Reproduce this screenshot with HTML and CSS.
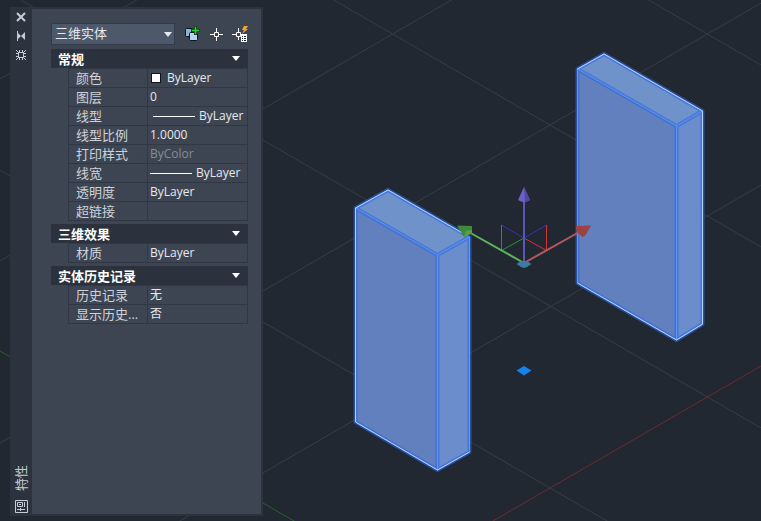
FILE: index.html
```
<!DOCTYPE html>
<html lang="zh-CN">
  <head>
    <meta charset="utf-8">
    <title>特性</title>
    <link rel="stylesheet" href="styles.css">
  </head>
  <body>
    <div class="workspace">
      <!-- model space -->
      <svg class="model" viewBox="0 0 761 521" preserveAspectRatio="xMinYMin slice" aria-hidden="true">
        <g class="grid">
          <path d="M0 -375L761 65M0 -193L761 247M0 -12L761 428M0 170L761 610" />
          <path d="M0 79L761 -361M0 261L761 -179M0 443L761 3M0 625L761 185" />
          <path class="axis-x" d="M0 806L761 366" />
          <path class="axis-y" d="M0 351L761 791" />
        </g>

        <g class="solid">
          <path class="face-top" d="M355 208L388 190L469 237L438 255Z" />
          <path class="face-front" d="M355 208L438 255V470L355 422Z" />
          <path class="face-side" d="M438 255L469 237V452L438 470Z" />
          <path class="glow" d="M355.500 208L388 190L469.500 237V452L437.500 470L355.500 422ZL437.500 255L469.500 237M437.500 255V470" />
          <path class="edge" d="M355.500 208L388 190L469.500 237V452L437.500 470L355.500 422ZL437.500 255L469.500 237M437.500 255V470" />
          <path class="edge-lit" d="M355.500 422V208L388 190L465 234.500M355.500 422L437.500 470L469.500 452" />
        </g>

        <g class="solid">
          <path class="face-top" d="M577 69L604 54L703 111L676 126Z" />
          <path class="face-front" d="M577 69L676 126V340L577 283Z" />
          <path class="face-side" d="M676 126L703 111V325L676 340Z" />
          <path class="glow" d="M577.500 69L604 54L702.500 111V324L676.500 340L577.500 283ZL676.500 126L702.500 111M676.500 126V340" />
          <path class="edge" d="M577.500 69L604 54L702.500 111V324L676.500 340L577.500 283ZL676.500 126L702.500 111M676.500 126V340" />
          <path class="edge-lit" d="M577.500 69L604 54L702.500 111V324L676.500 340L577.500 283" />
        </g>

        <!-- move gizmo -->
        <g class="gizmo">
          <path stroke="#3b2fb0" d="M501.500 225L524 238L546.500 225" />
          <path stroke="#1f9a2c" d="M501.500 225V250.500L524 238" />
          <path stroke="#d5303a" d="M546.500 225V250.500L524 238" />
          <path stroke="#5fb35c" stroke-width="2" d="M467 231L524 263" />
          <path stroke="#b45a5c" stroke-width="2" d="M581 231L524 263" />
          <path stroke="#5b57b4" stroke-width="2" d="M524 201V263" />
          <path fill="#3f8a3a" d="M457 225.500L472 226V233L464 237Z" />
          <path fill="#57a04c" d="M464 237L466 231L472 230V233Z" />
          <path fill="#9c4245" d="M591 225.500L576 226V230L582 237L585 236Z" />
          <path fill="#6d60c4" d="M524 187L518 200Q524 204 530 200Z" />
          <path fill="#5146a6" d="M524 187L525 202.500L530 200Z" />
          <path fill="#3d7ba4" d="M516.500 264L521 261H527L531.500 264L527 267L524 268L521 267Z" />
        </g>
        <path fill="#1484ea" d="M516.500 370.500L524 366L531.500 370.500L524 375.500Z" />
      </svg>

      <aside class="palette">
        <div class="strip">
          <button class="strip-btn" type="button" aria-label="关闭">
            <svg width="12" height="12" viewBox="0 0 12 12"><path d="M2 2L10 10M10 2L2 10" fill="none" stroke="currentColor" stroke-width="2" /></svg>
          </button>
          <button class="strip-btn" type="button" aria-label="自动隐藏">
            <svg width="12" height="12" viewBox="0 0 12 12"><path d="M2 1H3V11H2ZM3 3L6 6L3 9ZM10 2V10L6 6Z" fill="currentColor" /></svg>
          </button>
          <button class="strip-btn" type="button" aria-label="选项">
            <svg width="12" height="12" viewBox="0 0 12 12">
              <path d="M3.500 3.500H8.500V8.500H3.500Z" fill="none" stroke="currentColor" />
              <path d="M4.500 1V3M7.500 1V3M4.500 9V11M7.500 9V11M1 4.500H3M1 7.500H3M9 4.500H11M9 7.500H11M1 1L4 4M11 1L8 4M1 11L4 8M11 11L8 8" fill="none" stroke="currentColor" />
            </svg>
          </button>
          <span class="strip-title">特性</span>
          <svg class="strip-icon" width="13" height="13" viewBox="0 0 13 13">
            <path d="M0.500 0.500H12.500V12.500H0.500ZM2.500 2.500H7.500V6.500H2.500ZM4 4.500H6M9.500 2V7M2 9.500H10M5.500 8V11" fill="none" stroke="currentColor" />
          </svg>
        </div>

        <div class="panel">
          <div class="toolbar">
            <div class="picker">
              <select class="picker-select" aria-label="对象类型">
                <option>三维实体</option>
              </select>
              <svg class="picker-arrow" width="8" height="5" viewBox="0 0 8 5"><path d="M0 0H8L4 5Z" fill="currentColor" /></svg>
            </div>
            <button class="tool" type="button" aria-label="切换 PICKADD">
              <svg width="16" height="16" viewBox="0 0 16 16">
                <rect x="1.500" y="2.500" width="8" height="8" rx="1" fill="#8fb4dc" stroke="#10151c" />
                <rect x="5.500" y="6.500" width="8" height="8" rx="1" fill="#b7d4f2" stroke="#10151c" />
                <path d="M10 0H13V3H16V6H13V9H10V6H7V3H10Z" fill="#0c3a12" />
                <path d="M11 1H12V4H15V5H12V8H11V5H8V4H11Z" fill="#2fd43a" stroke="#2fd43a" stroke-width="0.500" />
              </svg>
            </button>
            <button class="tool" type="button" aria-label="选择对象">
              <svg width="16" height="16" viewBox="0 0 16 16">
                <path d="M8.500 2V6M8.500 11V15M2 8.500H6M11 8.500H15M6.500 6.500H10.500V10.500H6.500Z" fill="none" stroke="#fff" />
              </svg>
            </button>
            <button class="tool" type="button" aria-label="快速选择">
              <svg width="16" height="16" viewBox="0 0 16 16">
                <path d="M6.500 2V6M6.500 10V14M0 8.500H4M4.500 6.500H8.500V10.500H4.500Z" fill="none" stroke="#fff" />
                <path d="M12 0H16L14 3H16L10 8L12 4H10Z" fill="#f5a02c" />
                <path d="M9 8H15V16H9Z" fill="#fff" />
                <path d="M10 10H11V11H10ZM12 10H14V11H12ZM10 12H11V13H10ZM12 12H14V13H12ZM10 14H11V15H10ZM12 14H14V15H12Z" fill="#222833" />
              </svg>
            </button>
          </div>

          <section class="group">
            <button class="group-head" type="button">常规<svg width="8" height="5" viewBox="0 0 8 5"><path d="M0 0H8L4 5Z" fill="currentColor" /></svg></button>
            <table class="props">
              <tr><th scope="row">颜色</th><td><span class="cell"><i class="swatch"></i>ByLayer</span></td></tr>
              <tr><th scope="row">图层</th><td>0</td></tr>
              <tr><th scope="row">线型</th><td><span class="cell linetype"><i class="line"></i>ByLayer</span></td></tr>
              <tr><th scope="row">线型比例</th><td>1.0000</td></tr>
              <tr><th scope="row">打印样式</th><td class="muted">ByColor</td></tr>
              <tr><th scope="row">线宽</th><td><span class="cell"><i class="line"></i>ByLayer</span></td></tr>
              <tr><th scope="row">透明度</th><td>ByLayer</td></tr>
              <tr><th scope="row">超链接</th><td></td></tr>
            </table>
          </section>

          <section class="group">
            <button class="group-head" type="button">三维效果<svg width="8" height="5" viewBox="0 0 8 5"><path d="M0 0H8L4 5Z" fill="currentColor" /></svg></button>
            <table class="props">
              <tr><th scope="row">材质</th><td>ByLayer</td></tr>
            </table>
          </section>

          <section class="group">
            <button class="group-head" type="button">实体历史记录<svg width="8" height="5" viewBox="0 0 8 5"><path d="M0 0H8L4 5Z" fill="currentColor" /></svg></button>
            <table class="props">
              <tr><th scope="row">历史记录</th><td>无</td></tr>
              <tr><th scope="row">显示历史...</th><td>否</td></tr>
            </table>
          </section>
        </div>
      </aside>
    </div>
  </body>
</html>
```

FILE: styles.css
```
* {
  box-sizing: border-box;
}
body {
  margin: 0;
  background: #212832;
  color: #e6e9ee;
  font-family: "Open Sans", "Noto Sans CJK SC", sans-serif;
  font-size: 12px;
}
button,
select {
  font: inherit;
  color: inherit;
  border: none;
  padding: 0;
  margin: 0;
  background: none;
}

/* the palette floats over the model, both share one grid cell */
.workspace {
  display: grid;
  height: 100vh;
  overflow: hidden;
}
.model {
  grid-area: 1 / 1;
  width: 100%;
  height: 100%;
}
.grid path {
  fill: none;
  stroke: #363d46;
}
.grid .axis-x {
  stroke: #6d2a33;
}
.grid .axis-y {
  stroke: #25602f;
}
.face-top {
  fill: #7092cb;
}
.face-front {
  fill: #6180bd;
}
.face-side {
  fill: #6b8dcc;
}
.glow,
.edge,
.edge-lit {
  fill: none;
  stroke-linejoin: round;
}
.glow {
  stroke: #2f6ae0;
  stroke-width: 4;
  opacity: 0.6;
}
.edge {
  stroke: #5f94fa;
}
.edge-lit {
  stroke: #b4cffa;
}
.gizmo path:not([fill]) {
  fill: none;
}

.palette {
  grid-area: 1 / 1;
  justify-self: start;
  display: flex;
  margin: 7px 0 5px 10px;
  padding: 2px 2px 2px 0;
  background: #2d333e;
}
.strip {
  width: 22px;
  padding: 1px 0 1px;
  display: flex;
  flex-direction: column;
  align-items: center;
  color: #c6ccd6;
}
.strip-btn {
  display: flex;
  align-items: flex-start;
  height: 19px;
  padding-top: 1px;
}
.strip-title {
  margin-top: auto;
  margin-bottom: 9px;
  font-size: 13px;
  line-height: 18px;
  writing-mode: vertical-rl;
  text-orientation: sideways;
  transform: rotate(180deg);
}
.panel {
  width: 229px;
  padding: 14px 13px 0 19px;
  background: #3e4552;
}

.toolbar {
  display: flex;
  align-items: center;
  margin-bottom: 4px;
}
.picker {
  display: grid;
  align-items: center;
  width: 125px;
  margin-right: 9px;
}
.picker-select {
  grid-area: 1 / 1;
  appearance: none;
  height: 22px;
  padding: 0 3px 2px;
  font-size: 13px;
  background: #4d586a;
  border: 1px solid #343c49;
}
.picker-arrow {
  grid-area: 1 / 1;
  justify-self: end;
  margin-right: 3px;
  pointer-events: none;
}
.tool {
  display: flex;
  align-items: center;
  height: 22px;
  padding-bottom: 1px;
  margin-right: 8px;
}
.tool:last-child {
  margin-right: 0;
}

.group {
  margin-bottom: 3px;
}
.group-head {
  display: flex;
  align-items: center;
  justify-content: space-between;
  width: 100%;
  height: 19px;
  padding: 0 8px 1px 7px;
  background: #2b313d;
  color: #fff;
  font-size: 13px;
  font-weight: bold;
}
.props {
  width: 180px;
  margin-left: auto;
  table-layout: fixed;
  border-collapse: collapse;
}
.props th,
.props td {
  height: 19px;
  padding: 0 0 0 2px;
  line-height: 18px;
  border: 1px solid #313845;
  text-align: left;
  white-space: nowrap;
}
.props th {
  width: 79px;
  padding-left: 7px;
  color: #cdd2da;
  font-size: 13px;
  font-weight: normal;
}
.props .muted {
  color: #868c97;
}
.cell {
  display: flex;
  align-items: center;
}
.linetype {
  padding-left: 3px;
}
.swatch {
  width: 10px;
  height: 10px;
  margin: 0 6px 0 1px;
  background: #fff;
  border: 1px solid #10141b;
}
.line {
  width: 42px;
  height: 1px;
  margin-right: 4px;
  background: #fff;
}
```
